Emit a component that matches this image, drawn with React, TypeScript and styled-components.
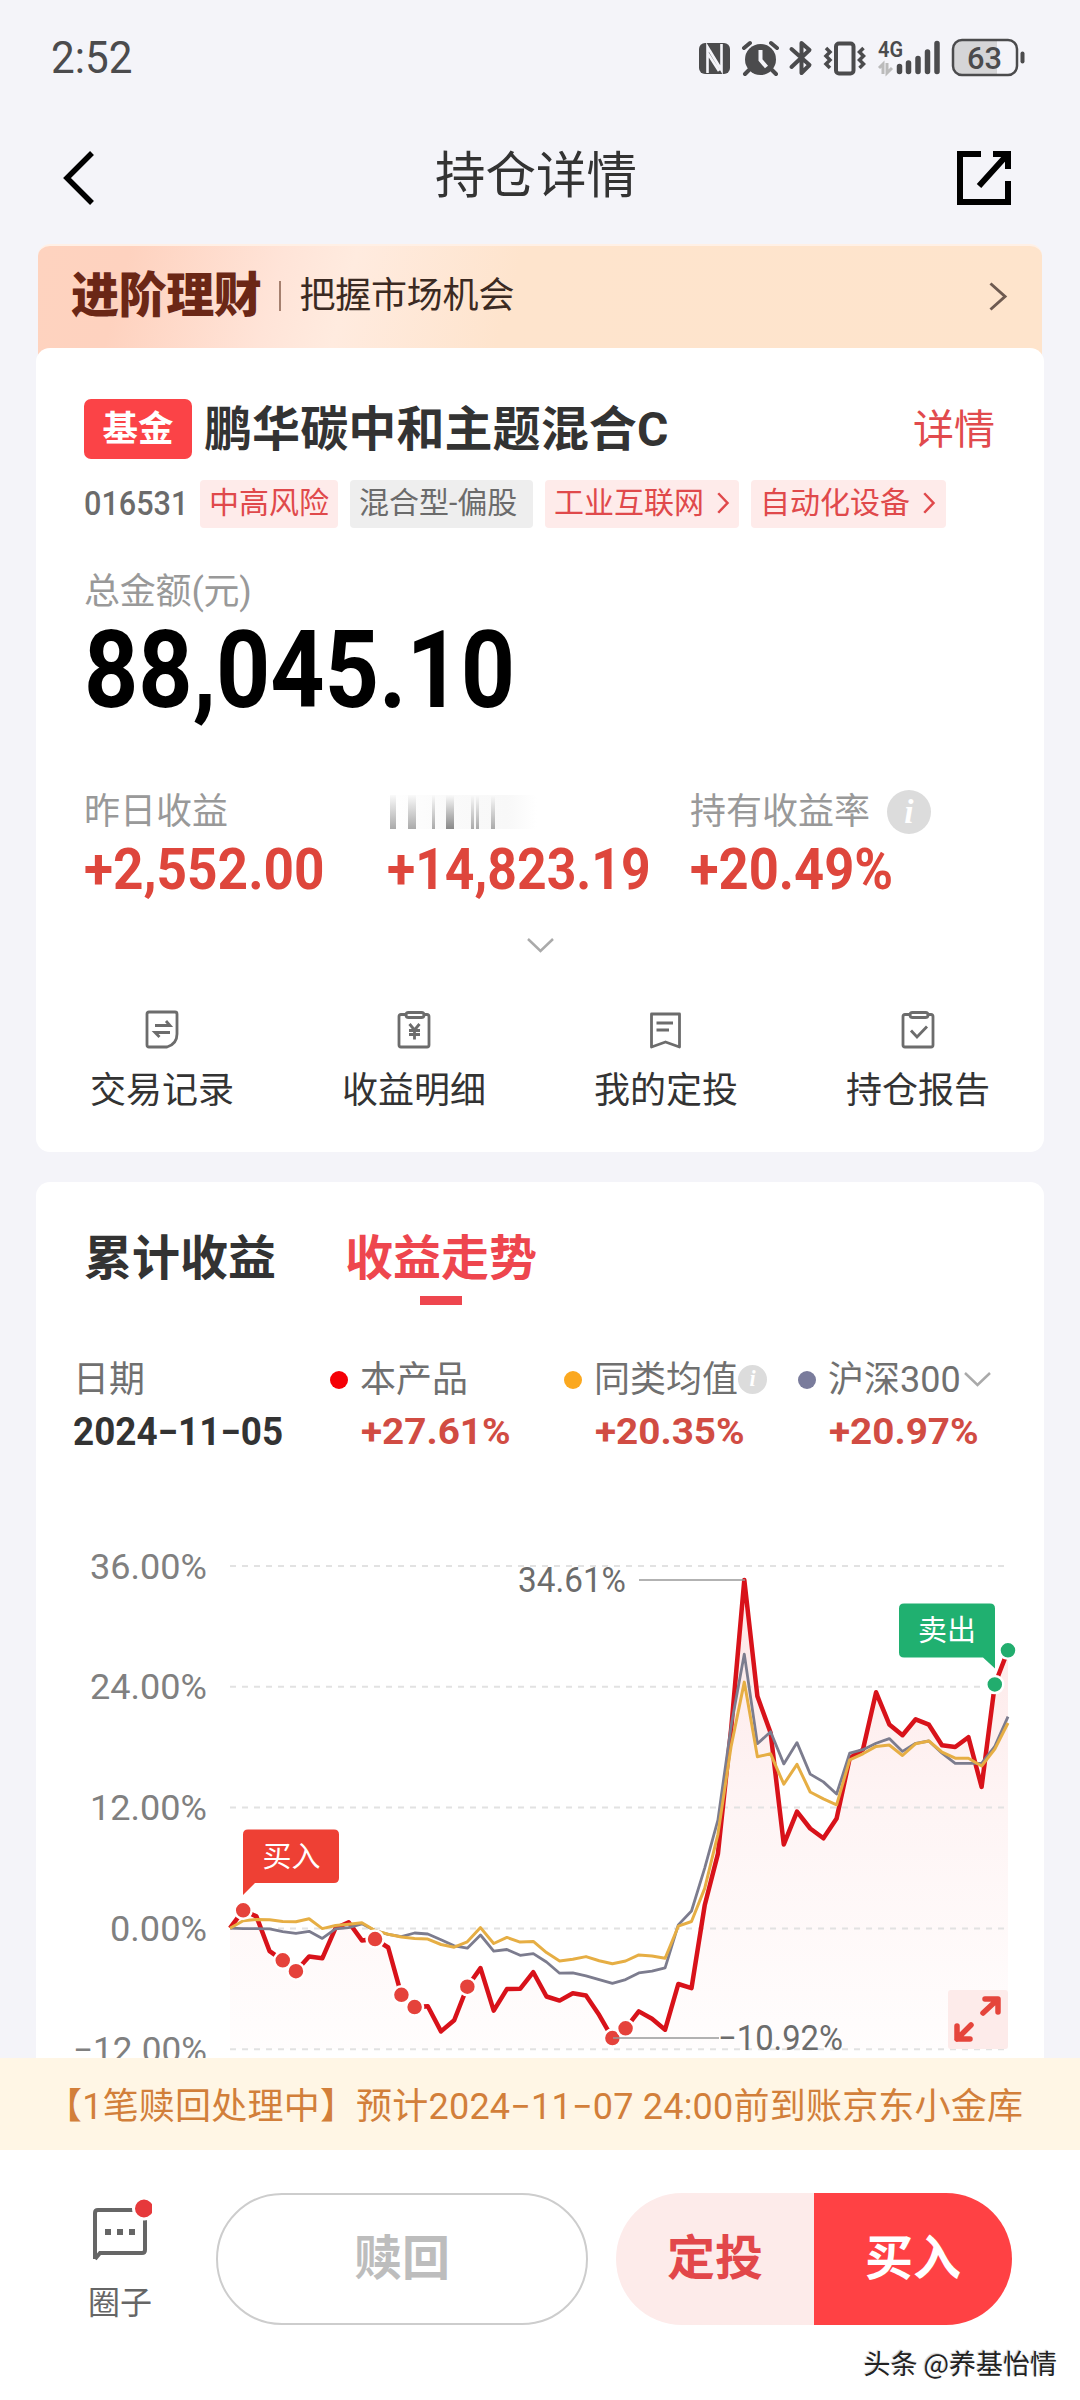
import React from "react";
import styled, { createGlobalStyle } from "styled-components";

const Global = createGlobalStyle`
  * { box-sizing: border-box; }
  html, body { margin: 0; padding: 0; background: #f4f4f9; }
  body { font-family: Roboto, "Noto Sans CJK SC", sans-serif; color: #333; }
  svg { display: block; }
`;

const Page = styled.div`
  width: 1080px;
  height: 2400px;
  display: flex;
  flex-direction: column;
  overflow: hidden;
  background: #f4f4f9;
`;

/* Label whose line box is as tall as asked for; glyphs can be narrowed. */
const Label = styled.span<{
  size: number;
  color?: string;
  weight?: number;
  line?: number;
  squeeze?: number;
  spacing?: number;
}>`
  display: block;
  flex: none;
  white-space: nowrap;
  font-size: ${(p) => p.size}px;
  line-height: ${(p) => p.line ?? p.size}px;
  color: ${(p) => p.color ?? "#333"};
  font-weight: ${(p) => p.weight ?? 400};
  letter-spacing: ${(p) => p.spacing ?? 0}px;
  transform: ${(p) => (p.squeeze ? `scaleX(${p.squeeze})` : "none")};
  transform-origin: 0 50%;
`;

const StatusBar = styled.header`
  height: 116px;
  padding: 0 54px 0 51px;
  display: flex;
  align-items: center;
  justify-content: space-between;
  flex: none;
`;

const NavBar = styled.nav`
  height: 128px;
  padding: 7px 68px 0 58px;
  display: grid;
  grid-template-columns: 60px 1fr 56px;
  align-items: start;
  flex: none;
`;

const NavTitle = styled(Label)`
  text-align: center;
  padding: 20px 2px 0 0;
`;

const NavIcon = styled.div`
  padding-top: 27px;
`;

const Scroller = styled.main`
  flex: 1;
  min-height: 0;
  overflow: hidden;
  padding: 0 36px;
`;

const Banner = styled.section`
  height: 116px;
  margin: 0 2px;
  padding: 0 34px 14px 33px;
  display: flex;
  align-items: center;
  border-radius: 12px 12px 0 0;
  border-top: 2px solid #fff0e6;
  background: linear-gradient(105deg, #fed3bf 0%, #fed2bf 9%, #ffe4d8 24%, #ffebdf 31%, #fee4cd 47%, #fee4cc 100%);
`;

const BannerRule = styled.i`
  width: 2px;
  height: 30px;
  margin: 0 18px 0 18px;
  background: #a5806f;
`;

const Push = styled.div`
  margin-left: auto;
`;

const Card = styled.section`
  position: relative;
  width: 1008px;
  border-radius: 14px;
  background: #fff;
`;

const Holding = styled(Card)`
  height: 804px;
  margin-top: -12px;
  padding-top: 51px;
`;

const FundHead = styled.div`
  height: 60px;
  padding: 0 49px 0 48px;
  display: flex;
  align-items: center;
`;

const FundName = styled(Label)`
  padding-top: 2px;
`;

const Badge = styled.span`
  width: 108px;
  height: 60px;
  padding-top: 1px;
  margin-right: 12px;
  border-radius: 7px;
  display: grid;
  place-items: center;
  background: #fb4347;
`;

const TagRow = styled.div`
  height: 48px;
  margin-top: 21px;
  padding-left: 48px;
  display: flex;
  align-items: center;
`;

const Code = styled.div`
  width: 116px;
  padding-bottom: 3px;
`;

const Tag = styled.span<{ width: number; grey?: boolean }>`
  width: ${(p) => p.width}px;
  height: 48px;
  margin-right: 12px;
  padding: 0 0 2px 9px;
  border-radius: 4px;
  display: flex;
  align-items: center;
  gap: 13px;
  background: ${(p) => (p.grey ? "#eeeeee" : "#feebea")};
`;

const Total = styled.div`
  padding: 46px 0 0 48px;
`;

const Amount = styled(Label)`
  margin-top: 2px;
`;

const Stats = styled.div`
  height: 117px;
  margin-top: 61px;
  padding-left: 48px;
  display: grid;
  grid-template-columns: 303px 303px 1fr;
`;

const StatLabel = styled.div`
  height: 45px;
  display: flex;
  align-items: center;
  gap: 17px;
`;

const Smudge = styled.div`
  width: 150px;
  height: 34px;
  display: flex;
  align-items: stretch;
  background: linear-gradient(90deg, #fff, #fafafa 40%, #f8f8f8 80%, #fff);
`;

const Streak = styled.i<{ width: number; gap: number; dark: string }>`
  width: ${(p) => p.width}px;
  margin-left: ${(p) => p.gap}px;
  background: linear-gradient(180deg, #fafafa, ${(p) => p.dark});
`;

const InfoDot = styled.span<{ size: number }>`
  width: ${(p) => p.size}px;
  height: ${(p) => p.size}px;
  flex: none;
  border-radius: 50%;
  display: grid;
  place-items: center;
  background: #dcdcdc;
  color: #fff;
  font: italic 700 ${(p) => p.size * 0.76}px/1 "Liberation Serif", serif;
`;

const Expander = styled.div`
  height: 103px;
  padding-top: 32px;
  display: flex;
  justify-content: center;
`;

const Actions = styled.div`
  display: grid;
  grid-template-columns: repeat(4, 1fr);
`;

const Action = styled.div`
  display: flex;
  flex-direction: column;
  align-items: center;
  gap: 24px;
`;

const Trend = styled(Card)`
  height: 1000px;
  margin-top: 30px;
  padding-top: 50px;
`;

const Tabs = styled.div`
  height: 120px;
  padding-left: 48px;
  display: flex;
  gap: 69px;
`;

const Tab = styled.div`
  display: flex;
  flex-direction: column;
  align-items: center;
  gap: 10px;
`;

const TabMark = styled.i`
  width: 42px;
  height: 9px;
  background: #ee464e;
`;

const Legend = styled.div`
  height: 110px;
  padding-left: 37px;
  display: grid;
  grid-template-columns: 257px 234px 234px 1fr;
`;

const LegendItem = styled.div<{ inset?: boolean }>`
  padding-left: ${(p) => (p.inset ? 31 : 0)}px;
`;

const LegendName = styled.div<{ inset?: boolean }>`
  height: 55px;
  margin-left: ${(p) => (p.inset ? -31 : 0)}px;
  display: flex;
  align-items: center;
`;

const Toggle = styled.span`
  margin-left: 3px;
`;

const Dot = styled.i<{ tone: string }>`
  width: 18px;
  height: 18px;
  margin-right: 12px;
  border-radius: 50%;
  background: ${(p) => p.tone};
`;

const Notice = styled.aside`
  height: 92px;
  flex: none;
  padding: 5px 0 0 46px;
  display: flex;
  align-items: center;
  background: #fff6e5;
`;

const Footer = styled.footer`
  position: relative;
  height: 250px;
  flex: none;
  padding: 43px 68px 0 72px;
  display: flex;
  background: #fff;
`;

const Circle = styled.div`
  width: 96px;
  padding: 6px 0 0;
  display: flex;
  flex-direction: column;
  align-items: center;
  gap: 20px;
`;

const Redeem = styled.button`
  width: 372px;
  height: 132px;
  margin-left: 48px;
  padding: 0;
  border: 2px solid #cdcdcd;
  border-radius: 66px;
  display: grid;
  place-items: center;
  background: #fff;
  font-family: inherit;
`;

const Split = styled.div`
  width: 396px;
  height: 132px;
  margin-left: 28px;
  border-radius: 66px;
  overflow: hidden;
  display: grid;
  grid-template-columns: 1fr 1fr;
`;

const Half = styled.button<{ solid?: boolean }>`
  padding: 0;
  border: 0;
  display: grid;
  place-items: center;
  background: ${(p) => (p.solid ? "#ff4144" : "#fdebea")};
  font-family: inherit;
`;

const Watermark = styled.div`
  position: absolute;
  right: 23px;
  bottom: 21px;
  font-size: 27px;
  line-height: 32px;
  font-family: "Noto Sans CJK SC", sans-serif;
  color: #222;
  white-space: nowrap;
  text-shadow: 1px 1px 0 #fff, -1px -1px 1px #ccc;
`;

const INK = "#4b4b4d";

const StatusIcons = () => (
  <svg width="330" height="40" viewBox="695 37 330 40" fill="none" stroke={INK}>
    <rect x="698" y="42" width="31" height="31" rx="6" fill={INK} stroke="none" />
    <path d="M706.5 72V46L718 65M720.500 43V69L709 50M706.500 52L718 70" stroke="#f4f4f9" strokeWidth="2.600" />
    <circle cx="759.500" cy="58.500" r="15.500" fill={INK} stroke="none" />
    <path d="M743 47l6-5M770 42l6 5M748 69l-4 4M771 69l4 4" strokeWidth="4" strokeLinecap="round" />
    <path d="M759.500 49v10l6 7" stroke="#f4f4f9" strokeWidth="4" />
    <path d="M790.500 48l18 16-8 8V42l8 7-18 17" strokeWidth="4" strokeLinejoin="round" strokeLinecap="round" />
    <rect x="835" y="42.500" width="17.500" height="30" rx="3" strokeWidth="4" />
    <path d="M825 47l4 4-4 4 4 4-4 4 4 4M862.500 47l-4 4 4 4-4 4 4 4-4 4" strokeWidth="3.500" />
    <text x="877" y="56" fontSize="22" fontWeight="600" fill={INK} stroke="none" textLength="25" lengthAdjust="spacingAndGlyphs">4G</text>
    <path d="M878 67l4-4v10M886 62v10l5-5" stroke="#bbb" strokeWidth="3" />
    <path d="M898.500 65.500v5M907.500 62v8.500M917 57.500v13M926.500 51v19.500M936 42.500v28" strokeWidth="5.500" strokeLinecap="round" />
    <path d="M962 39.500h34v34h-34a9 9 0 0 1-9-9v-16a9 9 0 0 1 9-9z" fill="#d5d5d7" stroke="none" />
    <rect x="952" y="39" width="64" height="35" rx="9" strokeWidth="2.500" />
    <path d="M1021.500 52.500v8" strokeWidth="4" strokeLinecap="round" />
    <text x="966" y="67.500" fontSize="31" fontWeight="500" fill={INK} stroke="none" textLength="35" lengthAdjust="spacingAndGlyphs">63</text>
  </svg>
);

const Chevron = ({ w, h, color, stroke }: { w: number; h: number; color: string; stroke: number }) => (
  <svg width={w} height={h} viewBox={`0 0 ${w} ${h}`} fill="none" stroke={color} strokeWidth={stroke}>
    <path d={`M${stroke / 2} ${stroke / 2}L${w - stroke} ${h / 2}L${stroke / 2} ${h - stroke / 2}`} />
  </svg>
);

const DownChevron = ({ w, h, color }: { w: number; h: number; color: string }) => (
  <svg width={w} height={h} viewBox={`0 0 ${w} ${h}`} fill="none" stroke={color} strokeWidth="2.500">
    <path d={`M1 1L${w / 2} ${h - 2}L${w - 1} 1`} />
  </svg>
);

const actionIcons = [
  <>
    <path d="M6 3h26q2 0 2 2v20q0 10-10 13H6q-2 0-2-2V5q0-2 2-2z" />
    <path d="M12 16.500h15l-4-4.500M27 23.500H12l4.500 4.500" strokeWidth="2.800" />
  </>,
  <>
    <path d="M10 5.500H6q-2 0-2 2V36q0 2 2 2h26q2 0 2-2V7.500q0-2-2-2h-4" />
    <rect x="11" y="3.500" width="18" height="5" rx="2.500" />
    <path d="M14.500 15l5 6 5-6M19.500 20v10.500M14 21.500h11M14 25.500h11" />
  </>,
  <>
    <path d="M4.500 5h28V38L18.500 33 4.500 38z" strokeLinejoin="round" />
    <path d="M9.500 14h16.500M9.500 21h12.500" strokeWidth="2.800" />
  </>,
  <>
    <path d="M10 5.500H6q-2 0-2 2V36q0 2 2 2h26q2 0 2-2V7.500q0-2-2-2h-4" />
    <rect x="11" y="3.500" width="18" height="5" rx="2.500" />
    <path d="M12 21.500l6 6.500 10-10.500" strokeWidth="2.800" />
  </>,
];

const ActionIcon = ({ index }: { index: number }) => (
  <svg width="38" height="40" viewBox="0 0 38 40" fill="none" stroke="#6c6c6c" strokeWidth="2.800">
    {actionIcons[index]}
  </svg>
);

/* Depth of every point below the plot's top, in chart units of about a third of a pixel. */
const fundLine = [1178, 1125, 1143, 1246, 1273, 1305, 1262, 1267, 1178, 1160, 1214, 1210, 1235, 1375, 1411, 1409, 1483, 1450, 1351, 1296, 1422, 1358, 1357, 1308, 1380, 1392, 1370, 1377, 1435, 1503, 1474, 1424, 1446, 1478, 1343, 1355, 1110, 958, 590, 148, 492, 600, 930, 833, 883, 912, 853, 675, 650, 480, 575, 607, 560, 576, 637, 642, 613, 760, 457, 356];
const indexLine = [1178, 1179, 1179, 1180, 1188, 1193, 1187, 1208, 1180, 1176, 1165, 1185, 1196, 1203, 1192, 1195, 1212, 1230, 1237, 1198, 1246, 1241, 1258, 1253, 1278, 1311, 1310, 1319, 1330, 1341, 1330, 1310, 1305, 1295, 1168, 1127, 1000, 858, 580, 367, 632, 597, 692, 629, 722, 745, 781, 660, 650, 631, 617, 655, 631, 624, 660, 690, 690, 690, 640, 552];
const peerLine = [1178, 1156, 1152, 1153, 1158, 1159, 1150, 1179, 1170, 1166, 1162, 1185, 1196, 1204, 1208, 1210, 1226, 1234, 1218, 1176, 1223, 1205, 1219, 1217, 1250, 1275, 1270, 1262, 1274, 1283, 1275, 1257, 1260, 1267, 1172, 1158, 1060, 900, 640, 450, 671, 662, 752, 693, 775, 795, 813, 680, 662, 640, 636, 667, 632, 624, 657, 675, 675, 698, 648, 571];

const px = (i: number) => 194 + i * 13.186;
const py = (v: number) => 68 + v / 2.958;
const trace = (values: number[]) =>
  values.map((v, i) => `${i ? "L" : "M"}${px(i).toFixed(1)} ${py(v).toFixed(1)}`).join("");

const axis = ["36.00%", "24.00%", "12.00%", "0.00%", "−12.00%"];
const buys = [1, 4, 5, 11, 13, 14, 18, 29, 30];
const sells = [58, 59];

const TrendChart = () => (
  <svg width="1008" height="640" viewBox="0 0 1008 640" fill="none">
    <defs>
      <linearGradient id="wash" x1="0" y1="117" x2="0" y2="590" gradientUnits="userSpaceOnUse">
        <stop offset="0" stopColor="#fde5e5" />
        <stop offset="0.45" stopColor="#fef4f4" />
        <stop offset="1" stopColor="#fffdfd" />
      </linearGradient>
    </defs>
    <path d={`${trace(fundLine)}V587H194Z`} fill="url(#wash)" />
    {axis.map((name, i) => (
      <g key={name}>
        <path d={`M194 ${104 + i * 120.800}H972`} stroke="#e2e2e2" strokeWidth="2" strokeDasharray="6 6" />
        <text x="171" y={116.500 + i * 120.800} fontSize="34.500" fill="#808080" textAnchor="end" textLength={name.length === 5 ? 97 : name.length === 6 ? 117 : 134} lengthAdjust="spacingAndGlyphs">{name}</text>
      </g>
    ))}
    <path d={trace(fundLine)} stroke="#d8121a" strokeWidth="4.500" strokeLinejoin="round" />
    <path d={trace(indexLine)} stroke="#7c7c8e" strokeWidth="2.800" strokeLinejoin="round" />
    <path d={trace(peerLine)} stroke="#e6ae44" strokeWidth="3" strokeLinejoin="round" />
    {buys.map((i) => (
      <circle key={i} cx={px(i)} cy={py(fundLine[i])} r="8.500" fill="#e5423b" stroke="#fff" strokeWidth="2.500" />
    ))}
    {sells.map((i) => (
      <circle key={i} cx={px(i)} cy={py(fundLine[i])} r="8.500" fill="#22ad6e" stroke="#fff" strokeWidth="2.500" />
    ))}
    <path d="M603 118H709M577 576H683" stroke="#999" strokeWidth="1.500" />
    <text x="482" y="129.500" fontSize="34.500" fill="#6c6c6c" textLength="108" lengthAdjust="spacingAndGlyphs">34.61%</text>
    <text x="682" y="588" fontSize="34.500" fill="#6c6c6c" textLength="125" lengthAdjust="spacingAndGlyphs">−10.92%</text>
    <path d="M212 367.500h86q5 0 5 5v43.500q0 5-5 5H219l-12 12V372.500q0-5 5-5z" fill="#ee4034" />
    <text x="255.500" y="405" fontSize="29" fill="#fff" textAnchor="middle">买入</text>
    <path d="M868 141.500h86q5 0 5 5v60l-12-11h-79q-5 0-5-5v-44q0-5 5-5z" fill="#20b070" />
    <text x="911" y="179" fontSize="29" fill="#fff" textAnchor="middle">卖出</text>
    <rect x="912" y="528" width="60" height="59" rx="3" fill="#fdebea" />
    <path d="M947 551l14-13M949 537h13v13M935 563l-14 14M921 564v13h13" stroke="#e5453c" strokeWidth="5.500" strokeLinecap="round" strokeLinejoin="round" />
  </svg>
);

const RED = "#de463c";

export default function App() {
  return (
    <Page>
      <Global />
      <StatusBar>
        <Label size={44} color={INK} squeeze={0.96}>2:52</Label>
        <StatusIcons />
      </StatusBar>
      <NavBar>
        <NavIcon>
          <svg width="40" height="56" viewBox="0 0 40 56" fill="none" stroke="#000" strokeWidth="5.500">
            <path d="M34 3L9 28l25 25" />
          </svg>
        </NavIcon>
        <NavTitle size={50.5} line={66}>持仓详情</NavTitle>
        <NavIcon>
          <svg width="56" height="56" viewBox="0 0 56 56" fill="none" stroke="#000" strokeWidth="6">
            <path d="M25 4H4v48h48V31M37 4h15v15M51 5L23 36" />
          </svg>
        </NavIcon>
      </NavBar>
      <Scroller>
        <Banner>
          <Label size={48} weight={900} color="#6b2716" spacing={-0.4}>进阶理财</Label>
          <BannerRule />
          <Label size={36} color="#3b2a22" spacing={-0.2}>把握市场机会</Label>
          <Push><Chevron w={19} h={29} color="#6e5a50" stroke={3} /></Push>
        </Banner>

        <Holding>
          <FundHead>
            <Badge><Label size={35.5} weight={700} color="#fff">基金</Label></Badge>
            <FundName size={48} weight={700} spacing={0.1}>鹏华碳中和主题混合C</FundName>
            <Push><FundName size={41} color="#e14a4d">详情</FundName></Push>
          </FundHead>
          <TagRow>
            <Code><Label size={34} weight={500} color="#6b6b6b" squeeze={0.9}>016531</Label></Code>
            <Tag width={138}><Label size={30} color="#e0494b">中高风险</Label></Tag>
            <Tag width={183} grey><Label size={30} color="#6b6b6b">混合型-偏股</Label></Tag>
            <Tag width={194}>
              <Label size={30} color="#e0494b">工业互联网</Label>
              <Chevron w={13} h={22} color="#e0494b" stroke={2.500} />
            </Tag>
            <Tag width={195}>
              <Label size={30} color="#e0494b">自动化设备</Label>
              <Chevron w={13} h={22} color="#e0494b" stroke={2.500} />
            </Tag>
          </TagRow>
          <Total>
            <Label size={36} color="#999" spacing={-0.2}>总金额(元)</Label>
            <Amount size={108} line={116} weight={700} color="#000" squeeze={0.877}>88,045.10</Amount>
          </Total>
          <Stats>
            <div>
              <StatLabel><Label size={36} color="#999">昨日收益</Label></StatLabel>
              <Label size={58} line={70} weight={700} color={RED} squeeze={0.917}>+2,552.00</Label>
            </div>
            <div>
              <StatLabel>
                <Smudge>
                  <Streak width={6} gap={3} dark="#aaa" />
                  <Streak width={8} gap={12} dark="#aaa" />
                  <Streak width={3} gap={16} dark="#aaa" />
                  <Streak width={8} gap={11} dark="#888" />
                  <Streak width={3} gap={17} dark="#aaa" />
                  <Streak width={3} gap={2} dark="#aaa" />
                  <Streak width={4} gap={12} dark="#aaa" />
                </Smudge>
              </StatLabel>
              <Label size={58} line={70} weight={700} color={RED} squeeze={0.892}>+14,823.19</Label>
            </div>
            <div>
              <StatLabel><Label size={36} color="#999">持有收益率</Label><InfoDot size={44}>i</InfoDot></StatLabel>
              <Label size={58} line={70} weight={700} color={RED} squeeze={0.905}>+20.49%</Label>
            </div>
          </Stats>
          <Expander><DownChevron w={27} h={15} color="#aaa" /></Expander>
          <Actions>
            {["交易记录", "收益明细", "我的定投", "持仓报告"].map((name, i) => (
              <Action key={name}>
                <ActionIcon index={i} />
                <Label size={36}>{name}</Label>
              </Action>
            ))}
          </Actions>
        </Holding>

        <Trend>
          <Tabs>
            <Tab><Label size={48} line={54} weight={700}>累计收益</Label></Tab>
            <Tab><Label size={48} line={54} weight={700} color="#ee464e">收益走势</Label><TabMark /></Tab>
          </Tabs>
          <Legend>
            <LegendItem>
              <LegendName><Label size={36} color="#707070">日期</Label></LegendName>
              <Label size={38} line={50} weight={700} squeeze={0.97}>2024−11−05</Label>
            </LegendItem>
            <LegendItem inset>
              <LegendName inset><Dot tone="#f50006" /><Label size={36} color="#707070">本产品</Label></LegendName>
              <Label size={37} line={50} weight={700} color="#d14c43" squeeze={1.045}>+27.61%</Label>
            </LegendItem>
            <LegendItem inset>
              <LegendName inset>
                <Dot tone="#fba81f" /><Label size={36} color="#707070">同类均值</Label><InfoDot size={29}>i</InfoDot>
              </LegendName>
              <Label size={37} line={50} weight={700} color="#d14c43" squeeze={1.045}>+20.35%</Label>
            </LegendItem>
            <LegendItem inset>
              <LegendName inset>
                <Dot tone="#7a7c9c" /><Label size={36} color="#707070">沪深300</Label>
                <Toggle><DownChevron w={27} h={15} color="#aaa" /></Toggle>
              </LegendName>
              <Label size={37} line={50} weight={700} color="#d14c43" squeeze={1.045}>+20.97%</Label>
            </LegendItem>
          </Legend>
          <TrendChart />
        </Trend>
      </Scroller>

      <Notice>
        <Label size={36} color="#d27f3a" spacing={0.21}>【1笔赎回处理中】预计2024−11−07 24:00前到账京东小金库</Label>
      </Notice>
      <Footer>
        <Circle>
          <svg width="64" height="68" viewBox="0 0 64 68" fill="none">
            <path d="M7 60V14q0-3 3-3H54q3 0 3 3V51q0 3-3 3H12l-5 6" stroke="#666" strokeWidth="4" />
            <path d="M17 33h6M29 33h6M41 33h6" stroke="#666" strokeWidth="6" />
            <circle cx="56" cy="9.500" r="10.500" fill="#e6393b" stroke="#fff" strokeWidth="3" />
          </svg>
          <Label size={32} color="#666">圈子</Label>
        </Circle>
        <Redeem><Label size={48} weight={700} color="#bdbdbd">赎回</Label></Redeem>
        <Split>
          <Half><Label size={48} weight={700} color="#e2474a">定投</Label></Half>
          <Half solid><Label size={48} weight={700} color="#fff">买入</Label></Half>
        </Split>
        <Watermark>头条 @养基怡情</Watermark>
      </Footer>
    </Page>
  );
}
